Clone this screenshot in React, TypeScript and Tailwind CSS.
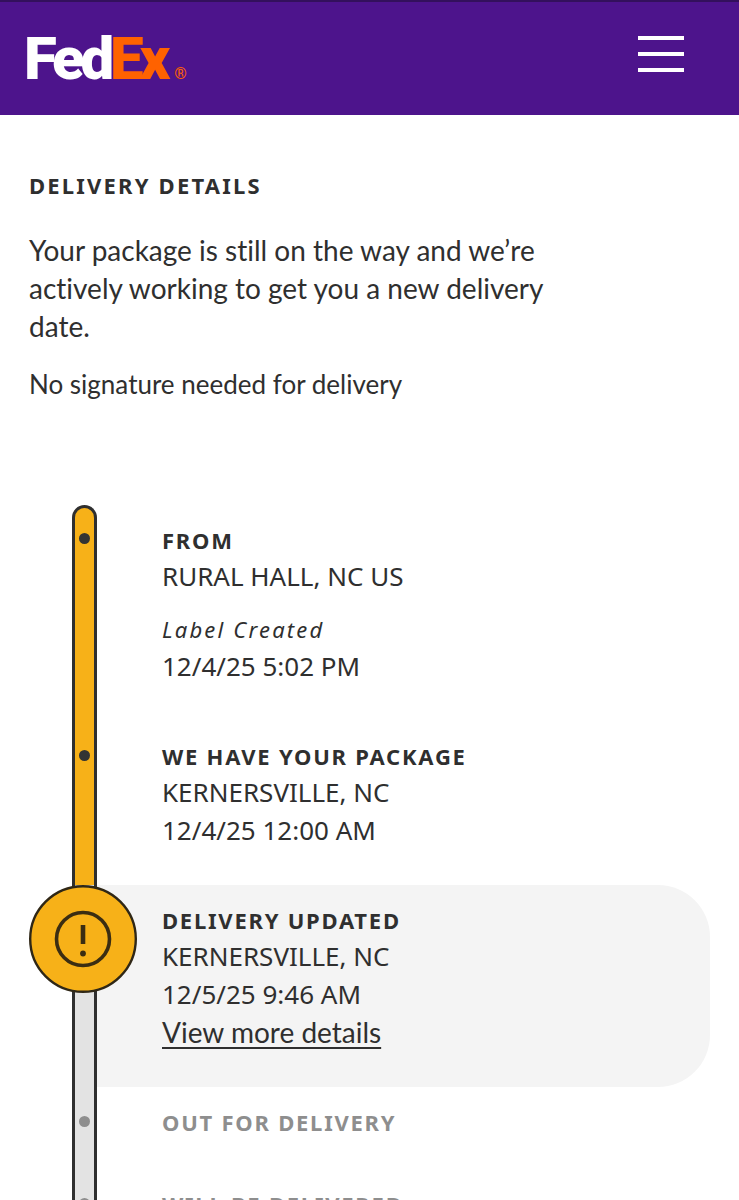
import { clsx } from 'clsx';

type Step = {
  title: string;
  place?: string;
  note?: string;
  time?: string;
  link?: string;
  state: 'done' | 'current' | 'pending';
};

const STEPS: Step[] = [
  { title: 'FROM', place: 'RURAL HALL, NC US', note: 'Label Created', time: '12/4/25 5:02 PM', state: 'done' },
  { title: 'WE HAVE YOUR PACKAGE', place: 'KERNERSVILLE, NC', time: '12/4/25 12:00 AM', state: 'done' },
  {
    title: 'DELIVERY UPDATED',
    place: 'KERNERSVILLE, NC',
    time: '12/5/25 9:46 AM',
    link: 'View more details',
    state: 'current',
  },
  { title: 'OUT FOR DELIVERY', state: 'pending' },
  { title: 'WILL BE DELIVERED', state: 'pending' },
];

export default function App() {
  return (
    <div className="h-screen overflow-hidden bg-white font-['Noto_Sans',sans-serif] text-[#2f2f2f]">
      <Header />
      <main className="px-[29px] pt-14">
        <h1 className="text-[22px] leading-7 font-bold tracking-widest">DELIVERY DETAILS</h1>
        <div className="mt-8 font-['Lato',sans-serif] leading-[38px] [font-variant-ligatures:none]">
          <p className="max-w-[560px] text-[28px]">
            Your package is still on the way and we’re actively working to get you a new delivery date.
          </p>
          <p className="mt-5 text-[26px]">No signature needed for delivery</p>
        </div>
        <ol className="mt-[102px]">
          {STEPS.map((step, i) => (
            <TimelineStep key={step.title} step={step} first={i === 0} />
          ))}
        </ol>
      </main>
    </div>
  );
}

function Header() {
  return (
    <header className="flex h-[115px] items-start justify-between border-t-2 border-[#33105c] bg-[#4d148c] pt-[34px] pr-[55px] pl-6">
      <a
        href="#"
        aria-label="FedEx"
        className="flex items-end font-['Roboto',sans-serif] text-[60px] leading-[46px] font-black"
      >
        <span className="tracking-[-0.07em] text-white">Fed</span>
        <span className="tracking-[-0.07em] text-[#ff6200]">Ex</span>
        <span className="ml-2 text-[16px] leading-4 font-normal text-[#ff6200]">®</span>
      </a>
      <button type="button" aria-label="Menu" className="flex w-[46px] flex-col gap-3">
        <span className="h-1 bg-white" />
        <span className="h-1 bg-white" />
        <span className="h-1 bg-white" />
      </button>
    </header>
  );
}

function TimelineStep({ step, first }: { step: Step; first: boolean }) {
  const { state } = step;
  return (
    <li className="flex">
      <div
        className={clsx(
          'relative z-10 ml-[43px] flex w-[25px] shrink-0 justify-center border-x-[3px] border-[#2f2f2f]',
          state === 'done' ? 'bg-[#f7b118]' : 'bg-[#e3e3e3]',
          first && 'rounded-t-full border-t-[3px]',
        )}
      >
        {state === 'current' ? (
          <AlertBadge />
        ) : (
          <span
            className={clsx(
              'size-[11px] shrink-0 rounded-full',
              first ? 'mt-[25px]' : 'mt-[29px]',
              state === 'done' ? 'bg-[#333333]' : 'bg-[#8e8e8e]',
            )}
          />
        )}
      </div>
      <div
        className={clsx(
          'grow pt-[18px] pl-[65px]',
          state === 'done' && 'pb-9',
          state === 'current' && 'rounded-r-[52px] bg-[#f4f4f4] pb-9',
          state === 'pending' && 'pb-[30px] text-[#8e8e8e]',
        )}
      >
        <h2 className="text-[22px] leading-[34px] font-bold tracking-[0.08em]">{step.title}</h2>
        {step.place && <p className="text-[26px] leading-[38px]">{step.place}</p>}
        {step.note && <p className="mt-4 text-[22px] leading-9 tracking-widest italic">{step.note}</p>}
        {step.time && <p className="text-[26px] leading-[38px]">{step.time}</p>}
        {step.link && (
          <a
            href="#"
            className="block w-fit font-['Lato',sans-serif] text-[28px] leading-[38px] underline underline-offset-4"
          >
            {step.link}
          </a>
        )}
      </div>
    </li>
  );
}

function AlertBadge() {
  return (
    <svg viewBox="0 0 108 108" className="absolute top-0 -left-[46px] size-[108px]" aria-hidden="true">
      <circle cx="54" cy="54" r="52.8" fill="#f7b118" stroke="#2f2716" strokeWidth="2.4" />
      <circle cx="54" cy="54" r="26.5" fill="none" stroke="#3b2d12" strokeWidth="3.6" />
      <path d="M54 40v19" stroke="#3b2d12" strokeWidth="4.6" />
      <circle cx="54" cy="68.5" r="2.9" fill="#3b2d12" />
    </svg>
  );
}
